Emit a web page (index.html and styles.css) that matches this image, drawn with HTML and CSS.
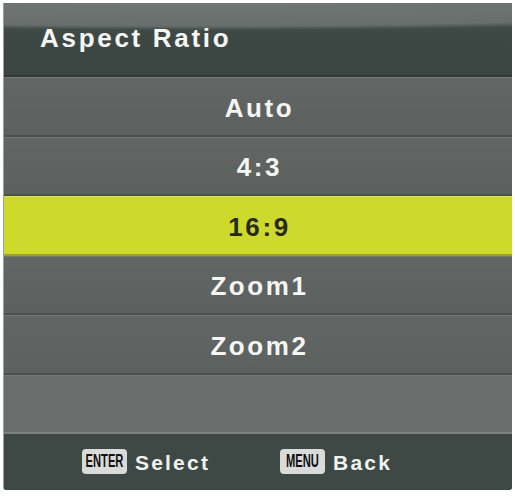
FILE: index.html
```html
<!DOCTYPE html>
<html>
<head>
<meta charset="utf-8">
<link rel="stylesheet" href="styles.css">
</head>
<body>
<div class="panel">
  <div class="header"><span class="title">Aspect Ratio</span></div>
  <div class="list">
    <div class="row">Auto</div>
    <div class="row">4:3</div>
    <div class="row selected">16:9</div>
    <div class="row">Zoom1</div>
    <div class="row">Zoom2</div>
    <div class="row empty"></div>
  </div>
  <div class="footer">
    <div class="hint"><span class="key"><span class="keytext">ENTER</span></span><span class="label">Select</span></div>
    <div class="hint"><span class="key"><span class="keytext">MENU</span></span><span class="label">Back</span></div>
  </div>
</div>
</body>
</html>
```
FILE: styles.css
```css
html, body {
  margin: 0;
  padding: 0;
  background: #ffffff;
}
body {
  width: 515px;
  height: 498px;
  overflow: hidden;
  font-family: "Liberation Sans", Arial, sans-serif;
}
.panel {
  margin: 3px 0 0 3px;
  width: 509px;
  height: 487px;
  display: flex;
  flex-direction: column;
  background: #5e6361;
  border-left: 1px solid #9aa09d;
  border-radius: 0 0 3px 3px;
  overflow: hidden;
  box-sizing: border-box;
}
.header {
  height: 74px;
  box-sizing: border-box;
  border-bottom: 2px solid #2f3835;
  background:
    radial-gradient(ellipse 130% 27px at 40% 0, #707774 0%, #676e6b 85%, rgba(103,110,107,0) 100%),
    linear-gradient(#46514d, #3d4844 50%, #3b4642);
  display: flex;
  align-items: center;
  padding-left: 36px;
  padding-bottom: 2px;
}
.title {
  color: #f4f6f4;
  font-weight: bold;
  font-size: 26px;
  letter-spacing: 2.7px;
}
.list {
  height: 357px;
  display: grid;
  grid-template-rows: repeat(6, 1fr);
}
.row {
  box-sizing: border-box;
  border-top: 1px solid #737875;
  border-bottom: 2px solid #4b504e;
  background: linear-gradient(#626765, #5c615f);
  display: flex;
  align-items: center;
  justify-content: center;
  color: #f4f6f4;
  font-weight: bold;
  font-size: 26px;
  letter-spacing: 2.6px;
  padding-left: 3px;
  padding-top: 4px;
}
.row.selected {
  background: #cdd92b;
  border-top: 1px solid #dbe548;
  border-bottom: 2px solid #9aa322;
  color: #262a1c;
}
.row.empty {
  background: #696d6b;
  border-bottom: 2px solid #7d827f;
}
.footer {
  flex: 1;
  background: #3e4945;
  display: flex;
  align-items: center;
  padding-left: 78px;
  gap: 70px;
  padding-top: 2px;
}
.hint {
  display: flex;
  align-items: center;
}
.key {
  width: 45px;
  height: 25px;
  box-sizing: border-box;
  background: #d9dbd9;
  border-radius: 4px;
  display: flex;
  align-items: center;
  justify-content: center;
  overflow: hidden;
  margin-top: -3px;
}
.keytext {
  display: inline-block;
  font-family: "Liberation Sans", Arial, sans-serif;
  font-weight: bold;
  font-size: 18px;
  color: #111111;
  transform: scaleX(0.62);
  letter-spacing: 0;
}
.label {
  margin-left: 8px;
  color: #f0f2f0;
  font-weight: bold;
  font-size: 21px;
  letter-spacing: 2.2px;
}
```
